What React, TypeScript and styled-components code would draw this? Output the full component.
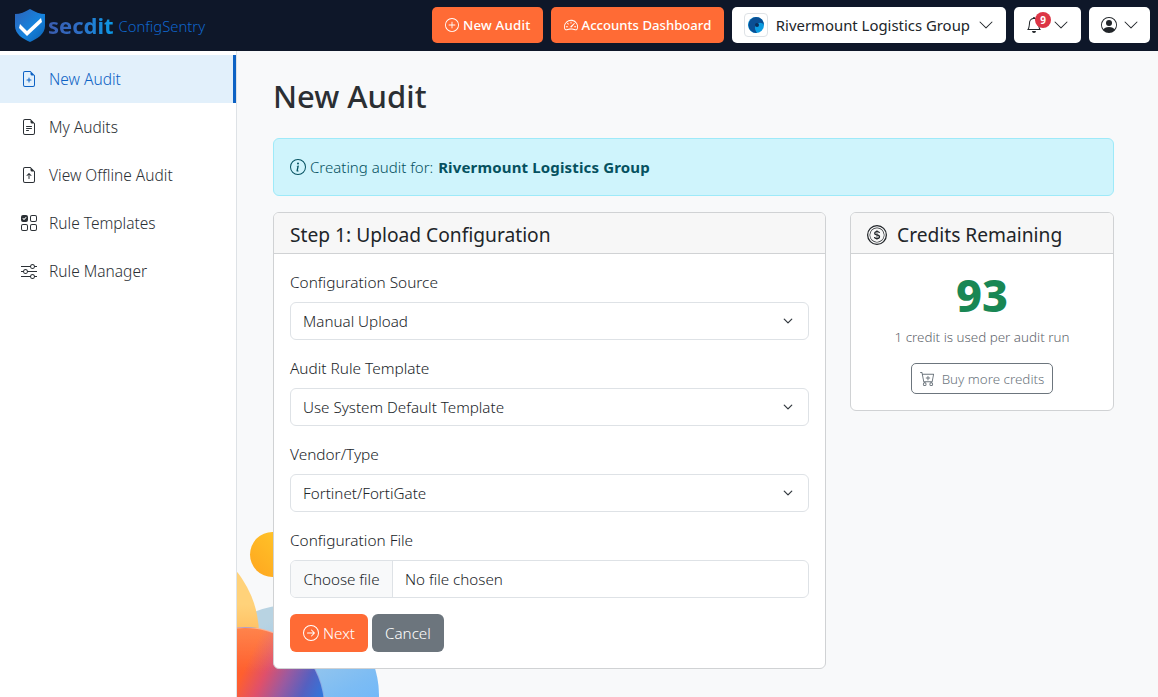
import styled, { createGlobalStyle } from 'styled-components';
import {
  BsArrowRightCircle,
  BsBell,
  BsCartPlus,
  BsChevronDown,
  BsCoin,
  BsFileEarmarkArrowUp,
  BsFileEarmarkPlus,
  BsFileEarmarkText,
  BsInfoCircle,
  BsPersonCircle,
  BsPlusCircle,
  BsSliders,
  BsSpeedometer2,
  BsUiChecksGrid,
} from 'react-icons/bs';

const GlobalStyle = createGlobalStyle`
  * { box-sizing: border-box; }
  html, body { margin: 0; height: 100%; }
  body {
    font-family: "Noto Sans", "Open Sans", sans-serif;
    font-size: 15px;
    color: #212529;
    background: #f8f9fa;
    overflow: hidden;
  }
`;

const Page = styled.div`
  width: 1158px;
  height: 697px;
  display: flex;
  flex-direction: column;
  overflow: hidden;
`;

const Navbar = styled.header`
  height: 51px;
  flex: none;
  background: #0e1729;
  display: flex;
  align-items: center;
  padding: 0 8px 1px 15px;
`;

const Brand = styled.div`
  display: flex;
  align-items: center;
  margin-right: auto;
`;

const BrandName = styled.span`
  font-size: 22px;
  font-weight: 700;
  margin-left: 3px;
  background: linear-gradient(90deg, #3a5cae 0%, #2f6cc4 45%, #0a9be8 100%);
  -webkit-background-clip: text;
  background-clip: text;
  color: transparent;
`;

const BrandProduct = styled.span`
  font-size: 14.8px;
  font-weight: 300;
  color: #0f66cc;
  margin-left: 5px;
  margin-top: 2px;
`;

const HeaderActions = styled.div`
  display: flex;
  align-items: center;
  gap: 8px;
`;

const OrangeButton = styled.button<{ $track?: number; $size?: number }>`
  height: 36px;
  padding: 0 12.5px;
  display: inline-flex;
  align-items: center;
  gap: 4px;
  border: 0;
  border-radius: 5px;
  background: #ff6b35;
  color: #fff;
  font: 500 ${(p) => p.$size ?? 13.3}px "Noto Sans", sans-serif;
  letter-spacing: ${(p) => p.$track ?? 0}px;
  white-space: nowrap;
`;

const WhiteButton = styled.button<{ $gap?: number; $right?: number }>`
  height: 36px;
  padding: 0 ${(p) => p.$right ?? 12}px 0 12px;
  display: inline-flex;
  align-items: center;
  gap: ${(p) => p.$gap ?? 8}px;
  border: 0;
  border-radius: 5px;
  background: #fff;
  color: #212529;
  font: 400 14.9px "Noto Sans", sans-serif;
  white-space: nowrap;
`;

const Avatar = styled.span`
  width: 24px;
  height: 24px;
  border: 1px solid #dee2e6;
  border-radius: 4px;
  display: inline-flex;
  align-items: center;
  justify-content: center;
`;

const BellWrap = styled.span`
  position: relative;
  display: inline-flex;
  font-size: 16px;
`;

const Badge = styled.span`
  position: absolute;
  top: -5px;
  left: 9px;
  width: 16px;
  height: 16px;
  border-radius: 50%;
  background: #dc3545;
  color: #fff;
  font-size: 10px;
  font-weight: 700;
  line-height: 16px;
  text-align: center;
`;

const Body = styled.div`
  flex: 1;
  display: flex;
  min-height: 0;
`;

const Sidebar = styled.nav`
  width: 237px;
  flex: none;
  background: #fff;
  border-right: 1px solid #dee2e6;
  padding-top: 4px;
`;

const NavItem = styled.a<{ $active?: boolean }>`
  height: 48px;
  display: flex;
  align-items: center;
  gap: 12px;
  padding-left: 21px;
  font-size: 15.5px;
  font-weight: 300;
  color: ${(p) => (p.$active ? '#0d62c4' : '#2b3035')};
  background: ${(p) => (p.$active ? '#e2f0fb' : 'transparent')};
  border-right: 3px solid ${(p) => (p.$active ? '#0d62c4' : 'transparent')};
  svg {
    font-size: 16px;
    flex: none;
  }
`;

const Main = styled.main`
  flex: 1;
  position: relative;
  padding: 23px 44px 0 36px;
  overflow: hidden;
`;

const Blob = styled.div<{ $x: number; $y: number; $size: number; $bg: string }>`
  position: absolute;
  left: ${(p) => p.$x}px;
  top: ${(p) => p.$y}px;
  width: ${(p) => p.$size}px;
  height: ${(p) => p.$size}px;
  border-radius: 50%;
  background: ${(p) => p.$bg};
`;

const OverlapBlob = styled(Blob)`
  border: 1px solid rgba(255, 255, 255, 0.4);
`;

const Content = styled.div`
  position: relative;
`;

const Title = styled.h1`
  margin: 0 0 20px;
  font-size: 31px;
  line-height: 44px;
  font-weight: 500;
  color: #2b2f33;
`;

const Alert = styled.div`
  height: 58px;
  display: flex;
  align-items: center;
  gap: 4px;
  padding: 0 16px;
  background: #cff4fc;
  border: 1px solid #9eeaf9;
  border-radius: 6px;
  color: #055160;
  font-size: 15px;
  font-weight: 300;
  margin-bottom: 16px;
  strong {
    font-weight: 700;
    letter-spacing: 0.15px;
    margin-left: 1px;
  }
  svg {
    font-size: 16px;
  }
`;

const Columns = styled.div`
  display: grid;
  grid-template-columns: 553px 264px;
  gap: 24px;
  align-items: start;
`;

const Card = styled.section`
  background: #fff;
  border: 1px solid #d0d2d4;
  border-radius: 6px;
  overflow: hidden;
`;

const CardHeader = styled.div`
  height: 41px;
  display: flex;
  align-items: center;
  gap: 10px;
  padding: 3px 16px 0;
  background: #f7f7f7;
  border-bottom: 1px solid #d0d2d4;
  font-size: 19.2px;
  font-weight: 400;
  color: #212529;
`;

const FormBody = styled.div`
  padding: 16px 16px 16px;
`;

const Field = styled.div`
  margin-bottom: 16px;
`;

const Label = styled.label`
  display: block;
  padding-top: 1px;
  font-size: 15.4px;
  font-weight: 300;
  line-height: 24px;
  margin-bottom: 7px;
`;

const Select = styled.select`
  display: block;
  width: 100%;
  height: 38px;
  padding: 0 36px 0 12px;
  appearance: none;
  background: #fff
    url("data:image/svg+xml,%3csvg xmlns='http://www.w3.org/2000/svg' viewBox='0 0 16 16'%3e%3cpath fill='none' stroke='%23343a40' stroke-linecap='round' stroke-linejoin='round' stroke-width='2' d='m2 5 6 6 6-6'/%3e%3c/svg%3e")
    no-repeat right 14px center / 12px 10px;
  border: 1px solid #dee2e6;
  border-radius: 6px;
  font: 300 15.2px "Noto Sans", sans-serif;
  color: #212529;
`;

const FileField = styled.div`
  display: flex;
  align-items: center;
  height: 38px;
  background: #fff;
  border: 1px solid #dee2e6;
  border-radius: 6px;
  overflow: hidden;
  font-size: 15.2px;
  font-weight: 300;
`;

const FileButton = styled.span`
  height: 100%;
  width: 102px;
  flex: none;
  display: flex;
  align-items: center;
  justify-content: center;
  background: #f8f9fa;
  border-right: 1px solid #dee2e6;
`;

const FileName = styled.span`
  padding-left: 12px;
`;

const Actions = styled.div`
  display: flex;
  gap: 4px;
`;

const FormButton = styled.button<{ $grey?: boolean }>`
  height: 38px;
  padding: 0 13px;
  display: inline-flex;
  align-items: center;
  gap: 4px;
  border: 0;
  border-radius: 6px;
  background: ${(p) => (p.$grey ? '#6c757d' : '#ff6b35')};
  color: #fff;
  font: 300 15.2px "Noto Sans", sans-serif;
  svg {
    font-size: 16px;
  }
`;

const CreditsBody = styled.div`
  padding: 13px 16px 16px;
  display: flex;
  flex-direction: column;
  align-items: center;
`;

const CreditsCount = styled.div`
  font-size: 45px;
  line-height: 56px;
  font-weight: 800;
  color: #198754;
`;

const CreditsNote = styled.div`
  font-size: 13.4px;
  font-weight: 300;
  line-height: 20px;
  color: #5f666d;
  margin: 4px 0 16px;
`;

const BuyButton = styled.button`
  height: 31px;
  padding: 0 8px;
  display: inline-flex;
  align-items: center;
  gap: 7px;
  background: transparent;
  border: 1px solid #6c757d;
  border-radius: 5px;
  color: #6c757d;
  font: 300 13.4px "Noto Sans", sans-serif;
  svg {
    font-size: 15px;
  }
`;

function ShieldLogo() {
  return (
    <svg width="30" height="33" viewBox="0 0 30 33">
      <defs>
        <linearGradient id="shield" x1="0" y1="0" x2="1" y2="1">
          <stop offset="0" stopColor="#2f62b8" />
          <stop offset="0.55" stopColor="#1583dd" />
          <stop offset="1" stopColor="#0c5eb0" />
        </linearGradient>
      </defs>
      <path d="M15 0 C20 3 25 5 30 5 V17 C30 25 22 30 15 33 C8 30 0 25 0 17 V5 C5 5 10 3 15 0Z" fill="url(#shield)" />
      <path d="M5 15 L12 22 L26 9 L27 13 L12 27 L4 19Z" fill="#fff" />
    </svg>
  );
}

function CompanyMark() {
  return (
    <svg width="16" height="16" viewBox="0 0 16 16">
      <circle cx="8" cy="8" r="8" fill="#0b9be0" />
      <path d="M8 0 A8 8 0 0 1 16 8 C14 5 10 5 8 8 C6 10 7 13 9 16 A8 8 0 0 1 8 0Z" fill="#0a4f94" />
      <circle cx="9" cy="8" r="2" fill="#0a2f5c" />
    </svg>
  );
}

const selects = [
  { label: 'Configuration Source', value: 'Manual Upload' },
  { label: 'Audit Rule Template', value: 'Use System Default Template' },
  { label: 'Vendor/Type', value: 'Fortinet/FortiGate' },
];

export default function App() {
  return (
    <Page>
      <GlobalStyle />
      <Navbar>
        <Brand>
          <ShieldLogo />
          <BrandName>secdit</BrandName>
          <BrandProduct>ConfigSentry</BrandProduct>
        </Brand>
        <HeaderActions>
          <OrangeButton $track={0.2}>
            <BsPlusCircle size={14} />
            New Audit
          </OrangeButton>
          <OrangeButton $size={13.15}>
            <BsSpeedometer2 size={14} />
            Accounts Dashboard
          </OrangeButton>
          <WhiteButton>
            <Avatar>
              <CompanyMark />
            </Avatar>
            Rivermount Logistics Group
            <BsChevronDown size={16} />
          </WhiteButton>
          <WhiteButton $gap={11}>
            <BellWrap>
              <BsBell />
              <Badge>9</Badge>
            </BellWrap>
            <BsChevronDown size={16} />
          </WhiteButton>
          <WhiteButton $gap={6} $right={11}>
            <BsPersonCircle size={16} />
            <BsChevronDown size={16} />
          </WhiteButton>
        </HeaderActions>
      </Navbar>
      <Body>
        <Sidebar>
          <NavItem $active>
            <BsFileEarmarkPlus />
            New Audit
          </NavItem>
          <NavItem>
            <BsFileEarmarkText />
            My Audits
          </NavItem>
          <NavItem>
            <BsFileEarmarkArrowUp />
            View Offline Audit
          </NavItem>
          <NavItem>
            <BsUiChecksGrid />
            Rule Templates
          </NavItem>
          <NavItem>
            <BsSliders />
            Rule Manager
          </NavItem>
        </Sidebar>
        <Main>
          <Blob $x={13} $y={481} $size={45} $bg="linear-gradient(45deg, #ffa51f, #ffcb2b)" />
          <Blob $x={-38} $y={554} $size={180} $bg="linear-gradient(150deg, #b8d3e2 20%, #7cbcf4 60%, #63b3ff 85%)" />
          <Blob $x={-179} $y={483} $size={201} $bg="linear-gradient(180deg, #ffd27a 35%, #ffb452 58%, #ff9a3a 72%)" />
          <OverlapBlob
            $x={-72}
            $y={576}
            $size={160}
            $bg="linear-gradient(180deg, rgba(255, 200, 130, 0.35) 0%, rgba(255, 200, 130, 0) 28%), linear-gradient(115deg, #ff5f2e 42%, #e0506a 52%, #9a5aa0 62%, #5560c0 72%, #2a7ae0 83%, #1f8cf5 92%)"
          />
          <Content>
            <Title>New Audit</Title>
            <Alert>
              <BsInfoCircle />
              <span>
                Creating audit for: <strong>Rivermount Logistics Group</strong>
              </span>
            </Alert>
            <Columns>
              <Card>
                <CardHeader>Step 1: Upload Configuration</CardHeader>
                <FormBody>
                  {selects.map((s) => (
                    <Field key={s.label}>
                      <Label>{s.label}</Label>
                      <Select defaultValue={s.value}>
                        <option>{s.value}</option>
                      </Select>
                    </Field>
                  ))}
                  <Field>
                    <Label>Configuration File</Label>
                    <FileField>
                      <FileButton>Choose file</FileButton>
                      <FileName>No file chosen</FileName>
                    </FileField>
                  </Field>
                  <Actions>
                    <FormButton>
                      <BsArrowRightCircle />
                      Next
                    </FormButton>
                    <FormButton $grey>Cancel</FormButton>
                  </Actions>
                </FormBody>
              </Card>
              <Card>
                <CardHeader>
                  <BsCoin size={20} />
                  Credits Remaining
                </CardHeader>
                <CreditsBody>
                  <CreditsCount>93</CreditsCount>
                  <CreditsNote>1 credit is used per audit run</CreditsNote>
                  <BuyButton>
                    <BsCartPlus />
                    Buy more credits
                  </BuyButton>
                </CreditsBody>
              </Card>
            </Columns>
          </Content>
        </Main>
      </Body>
    </Page>
  );
}
